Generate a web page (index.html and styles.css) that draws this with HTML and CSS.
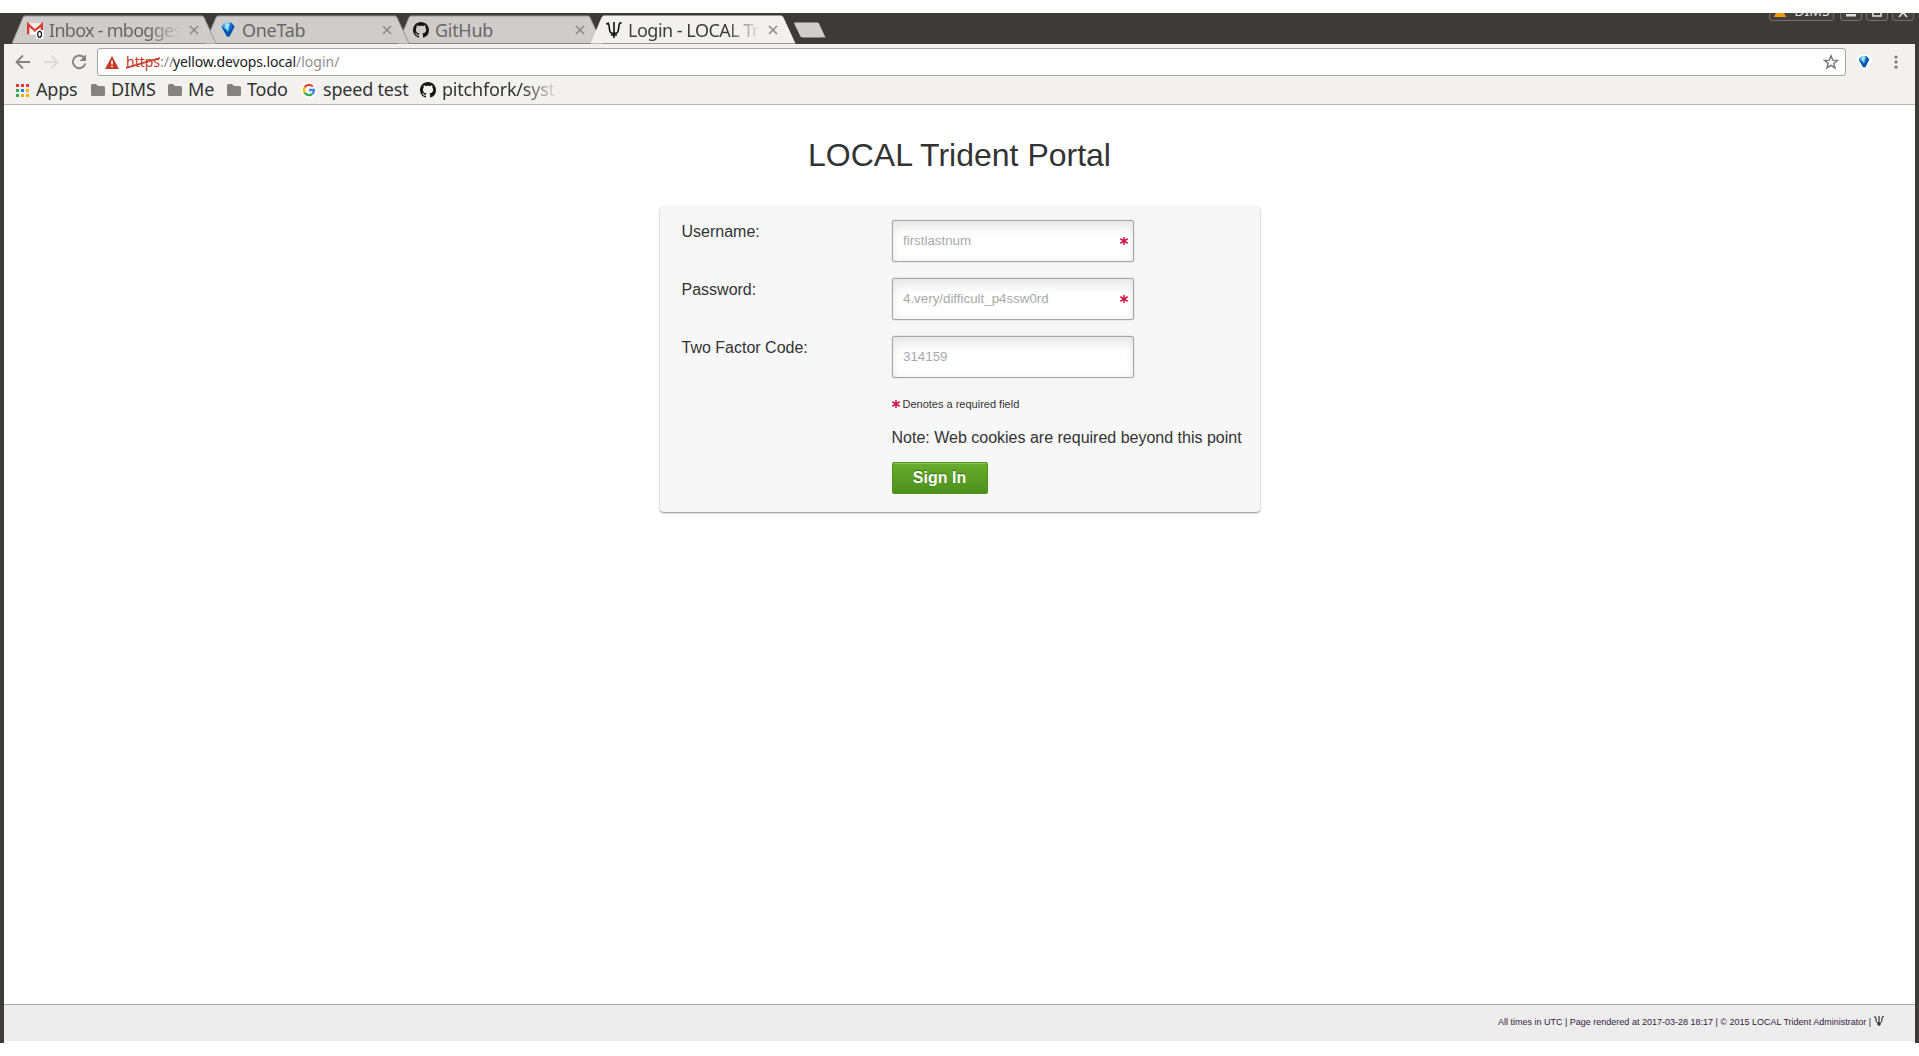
FILE: index.html
```html
<!DOCTYPE html>
<html lang="en">
<head>
<meta charset="utf-8">
<title>Login - LOCAL Trident Portal</title>
<link rel="stylesheet" href="styles.css">
</head>
<body>
<svg class="defs" width="0" height="0">
  <defs>
    <linearGradient id="blue" x1="0" x2="1"><stop offset="0" stop-color="#1674cf"/><stop offset=".4" stop-color="#8fdcff"/><stop offset=".6" stop-color="#1b83e2"/><stop offset="1" stop-color="#04398f"/></linearGradient>
    <symbol id="tab" viewBox="0 0 208 31"><path d="M0 30.500L11 4.500Q11.700 3 13 3H190Q191.500 3 192 4.500L204 30.500"/></symbol>
    <symbol id="close" viewBox="0 0 10 10"><path d="M1 1L9 9M9 1L1 9" stroke="#8a8988" stroke-width="1.500"/></symbol>
    <symbol id="github" viewBox="0 0 16 16"><path fill="#161616" d="M8 0C3.580 0 0 3.580 0 8c0 3.540 2.290 6.530 5.470 7.590.4.070.55-.17.55-.38 0-.19-.01-.82-.01-1.490-2.010.37-2.530-.49-2.690-.94-.09-.23-.48-.94-.82-1.130-.28-.15-.68-.52-.01-.53.63-.01 1.080.58 1.230.82.72 1.210 1.870.87 2.330.66.070-.52.28-.87.51-1.070-1.780-.2-3.640-.89-3.640-3.950 0-.87.31-1.590.82-2.150-.08-.2-.36-1.020.080-2.120 0 0 .67-.21 2.200.82.64-.18 1.320-.27 2-.27s1.360.09 2 .27c1.530-1.040 2.200-.82 2.200-.82.44 1.100.16 1.920.080 2.120.51.56.82 1.270.82 2.150 0 3.070-1.870 3.750-3.650 3.950.29.25.54.73.54 1.480 0 1.070-.01 1.930-.01 2.200 0 .21.15.46.55.38A8 8 0 0 0 16 8c0-4.420-3.580-8-8-8z"/></symbol>
    <symbol id="gem" viewBox="0 0 16 16"><path d="M4.500 .8H11.500L14.500 4.500L9.500 14.500H6.800L1.500 4.500z" fill="url(#blue)"/><path d="M1.500 4.500L6.800 14.500H9.500L14.500 4.500L10 7.500L8 10L6 7.500z" fill="#0754a8"/><path d="M4.500 1.500L7.800 7.500L10 1.500z" fill="#a5e6ff"/></symbol>
    <symbol id="trident" viewBox="0 0 16 16"><path d="M8 0V16M.3 2L2.300 1.200C4 4 2.500 9 5 10.800C6 11.600 10 11.600 11 10.800C13.500 9 12 4 13.700 1.200L15.700 .6M5 13H11" fill="none" stroke="#111" stroke-width="1.600"/></symbol>
    <symbol id="folder" viewBox="0 0 14 12"><path d="M1.500 0H5L7 2H12.500Q14 2 14 3.500V10.500Q14 12 12.500 12H1.500Q0 12 0 10.500V1.500Q0 0 1.500 0z" fill="#848382"/></symbol>
    <symbol id="star" viewBox="0 0 8 8"><path d="M4 0V8M.3 1.700L7.700 6.300M7.700 1.700L.3 6.300" stroke="#d01545" stroke-width="1.500"/></symbol>
  </defs>
</svg>
<div class="window">
  <div class="strip">
    <div class="tab t1">
      <svg class="shape"><use href="#tab"/></svg>
      <svg class="fav" viewBox="0 0 16 16"><path d="M0 1.500H16V12.500H0z" fill="#fff"/><path d="M1.200 12.500V2.500L8 8.500L14.800 2.500V12.500" fill="none" stroke="#dc3e35" stroke-width="2.400"/><path d="M2 1.500L8 6.800L14 1.500z" fill="#f1eeee"/><rect x="9" y="8" width="7.500" height="9" fill="#fff"/><ellipse cx="12.600" cy="12.300" rx="1.900" ry="3" fill="none" stroke="#111" stroke-width="1.200"/></svg>
      <span class="label fade inbox">Inbox - mbogges</span><svg class="x"><use href="#close"/></svg>
    </div>
    <div class="tab t2">
      <svg class="shape"><use href="#tab"/></svg><svg class="fav"><use href="#gem"/></svg>
      <span class="label">OneTab</span><svg class="x"><use href="#close"/></svg>
    </div>
    <div class="tab t3">
      <svg class="shape"><use href="#tab"/></svg><svg class="fav"><use href="#github"/></svg>
      <span class="label">GitHub</span><svg class="x"><use href="#close"/></svg>
    </div>
    <div class="tab t4">
      <svg class="shape"><use href="#tab"/></svg><svg class="fav"><use href="#trident"/></svg>
      <span class="label fade login">Login - LOCAL Tr</span><svg class="x"><use href="#close"/></svg>
    </div>
    <svg class="newtab" viewBox="0 0 34 16"><path d="M2 .5H24Q25.500 .5 26 1.500L32.500 15.500H10Q8 15.500 7.200 14L1.200 1.500Q1 .5 2 .5z" fill="#cfcdcc"/></svg>
    <div class="controls">
      <div class="ctl user"><svg width="14" height="14" viewBox="0 0 14 14"><path d="M7 0L13 13H1z" fill="#f29a0d"/></svg><span>DIMS</span></div>
      <div class="ctl"><svg width="10" height="14"><rect y="10" width="10" height="2.500" fill="#ddd"/></svg></div>
      <div class="ctl"><svg width="10" height="14"><rect x="1" y="3" width="8" height="9" fill="none" stroke="#ddd" stroke-width="1.600"/></svg></div>
      <div class="ctl"><svg width="10" height="14"><path d="M1 4L9 13M9 4L1 13" stroke="#ddd" stroke-width="1.700"/></svg></div>
    </div>
  </div>
  <div class="toolbar">
    <div class="nav">
      <svg viewBox="0 0 16 16"><path d="M15 8H2M8 1.500L1.500 8L8 14.500" fill="none" stroke="#838282" stroke-width="1.800"/></svg>
      <svg viewBox="0 0 16 16"><path d="M1 8H14M8 1.500L14.500 8L8 14.500" fill="none" stroke="#dcdad9" stroke-width="1.800"/></svg>
      <svg viewBox="0 0 16 16"><path d="M13.200 4A6.300 6.300 0 1 0 14.300 9.500" fill="none" stroke="#838282" stroke-width="1.900"/><path d="M15 .5V7H8.500z" fill="#838282"/></svg>
    </div>
    <div class="omnibox">
      <svg class="warn" viewBox="0 0 14 13"><path d="M7 0L14 13H0z" fill="#c53929"/><path d="M6.200 4.500H7.800V8.500H6.200zM6.200 9.800H7.800V11.300H6.200z" fill="#fff"/></svg>
      <div class="url"><span class="https">https<svg viewBox="0 0 35 12" class="strike"><path d="M0 11L34 1" stroke="#c53929" stroke-width="1.700"/></svg></span><span class="dim">://</span><span class="host">yellow.devops.local</span><span class="dim path">/login/</span></div>
      <svg class="bookmark" viewBox="0 0 16 16"><path d="M8 1.800L9.700 6.100L14.400 6.400L10.800 9.400L12 13.900L8 11.400L4 13.900L5.200 9.400L1.600 6.400L6.300 6.100z" fill="none" stroke="#757474" stroke-width="1.400"/></svg>
    </div>
    <svg class="ext" viewBox="0 0 16 16"><path d="M4 2H12L15 5L10 14.500H7L1 5z" fill="#fff" stroke="#fff" stroke-width="2.500"/><use href="#gem" x="1.500" y="1.500" width="13" height="13"/></svg>
    <svg class="menu" viewBox="0 0 4 14"><g fill="#757474"><circle cx="2" cy="2" r="1.600"/><circle cx="2" cy="7" r="1.600"/><circle cx="2" cy="12" r="1.600"/></g></svg>
  </div>
  <div class="bookmarks">
    <svg class="apps" viewBox="0 0 13 13"><path d="M0 0h3v3H0zM5 0h3v3H5zM10 0h3v3H10z" fill="#e53935"/><path d="M0 5h3v3H0zM0 10h3v3H0z" fill="#34a853"/><path d="M5 5h3v3H5z" fill="#1a86e8"/><path d="M10 5h3v3H10zM5 10h3v3H5zM10 10h3v3H10z" fill="#f9b20b"/></svg><span class="b1">Apps</span>
    <svg class="folder"><use href="#folder"/></svg><span class="b2">DIMS</span>
    <svg class="folder"><use href="#folder"/></svg><span class="b3">Me</span>
    <svg class="folder"><use href="#folder"/></svg><span class="b4">Todo</span>
    <svg class="google" viewBox="0 0 16 16"><circle cx="8" cy="8" r="8" fill="#fff"/><g fill="none" stroke-width="2.300"><path d="M3.600 5.400A5.100 5.100 0 0 1 11.800 4.500" stroke="#ea4335"/><path d="M3.600 5.400A5.100 5.100 0 0 0 3.600 10.600" stroke="#fbbc05"/><path d="M3.600 10.600A5.100 5.100 0 0 0 11.300 11.900" stroke="#34a853"/><path d="M11.300 11.900A5 5 0 0 0 13 8H8" stroke="#4285f4"/></g></svg><span class="b5">speed test</span>
    <svg class="gh"><use href="#github"/></svg><span class="b6">pitchfork/syst</span>
  </div>
  <main class="page">
    <h1>LOCAL Trident Portal</h1>
    <form class="card">
      <label for="user">Username:</label>
      <div class="field"><input id="user" placeholder="firstlastnum"><svg><use href="#star"/></svg></div>
      <label for="pass">Password:</label>
      <div class="field"><input id="pass" type="password" placeholder="4.very/difficult_p4ssw0rd"><svg><use href="#star"/></svg></div>
      <label for="code">Two Factor Code:</label>
      <div class="field"><input id="code" placeholder="314159"></div>
      <div class="required"><svg><use href="#star"/></svg>Denotes a required field</div>
      <div class="note">Note: Web cookies are required beyond this point</div>
      <button type="button">Sign In</button>
    </form>
  </main>
  <footer><span>All times in UTC | Page rendered at 2017-03-28 18:17 | © 2015 LOCAL Trident Administrator |</span><svg><use href="#trident"/></svg></footer>
</div>
</body>
</html>
```
FILE: styles.css
```css
* { box-sizing: border-box; }
body { margin: 0; padding-top: 13px; background: #fff; font-family: "Liberation Sans", Arial, sans-serif; color: #333; overflow: hidden; }
svg { display: block; flex: none; }
.defs { position: absolute; }
.window { height: 1030px; display: flex; flex-direction: column; border: solid #3c3b37; border-width: 0 4px; padding-bottom: 2px; }
.strip { height: 31px; display: flex; padding-left: 8px; background: #3c3b37; overflow: hidden; font: 18px "Noto Sans", sans-serif; }
.strip, .tab { position: relative; }
.tab { width: 193px; flex: none; display: flex; align-items: center; padding: 2px 0 0 15px; color: #686766; isolation: isolate; }
.shape { position: absolute; left: 0; top: 0; width: 208px; height: 31px; fill: #cfcdcc; stroke: #999897; stroke-width: 1; z-index: -1; }
.t1 { z-index: 3; }
.t2 { z-index: 2; }
.t3 { z-index: 1; }
.t4 { z-index: 4; color: #3c3c3c; }
.t4 .shape { fill: #f2f1f0; stroke: #f2f1f0; }
.fav { width: 16px; height: 16px; overflow: visible; }
.label { width: 132px; margin-left: 6px; white-space: nowrap; letter-spacing: -.3px; }
.inbox { letter-spacing: -.72px; }
.login { letter-spacing: -.5px; }
.fade { -webkit-mask-image: linear-gradient(90deg, #000 75%, transparent 100%); mask-image: linear-gradient(90deg, #000 75%, transparent 100%); }
.x { width: 10px; height: 10px; margin-left: 8px; }
.newtab { width: 34px; height: 16px; margin: 9px 0 0 9px; }
.controls { display: flex; gap: 4px; margin: -10px 1px 0 auto; height: 18px; }
.ctl { width: 22px; height: 18px; border: 1px solid #74726c; border-radius: 3px; display: flex; justify-content: center; background: #42413d; }
.user { width: 65px; gap: 7px; margin-right: 2px; color: #ddd; font-size: 14px; line-height: 14px; }
.toolbar { height: 33px; display: flex; align-items: center; padding: 4px 17px 1px 11px; background: #f2f1f0; }
.nav { display: flex; width: 82px; gap: 12px; }
.nav svg { width: 16px; height: 16px; }
.omnibox { width: 1749px; height: 28px; border: 1px solid #a5a4a3; border-radius: 3px; background: #fff; display: flex; align-items: center; padding: 0 6px 0 7px; }
.warn { width: 14px; height: 13px; margin-right: 7px; }
.url { font: 14px "Noto Sans", sans-serif; display: flex; flex: 1; color: #222; white-space: nowrap; padding-bottom: 1px; }
.https { position: relative; color: #c53929; width: 34px; }
.strike { position: absolute; left: 0; top: 5px; width: 35px; height: 12px; }
.dim { color: #8f8f8f; width: 13px; }
.host { width: 123px; letter-spacing: -.15px; }
.bookmark, .ext { width: 16px; height: 16px; }
.ext { margin-left: 10px; overflow: visible; }
.menu { width: 4px; height: 14px; margin-left: auto; }
.bookmarks { height: 28px; display: flex; align-items: center; padding: 0 0 1px 12px; background: #f2f1f0; border-bottom: 1px solid #b6b5b4; font: 18px "Noto Sans", sans-serif; letter-spacing: -.2px; color: #333; }
.bookmarks span { white-space: nowrap; margin: -2px 0 0 6px; }
.apps { width: 13px; height: 13px; }
.folder { width: 14px; height: 12px; }
.google, .gh { width: 16px; height: 16px; }
.b1 { width: 56px; padding-left: 1px; }
.b2 { width: 57px; }
.b3 { width: 39px; }
.b4 { width: 54px; }
.b5 { width: 97px; }
.b6 { width: 116px; -webkit-mask-image: linear-gradient(90deg, #000 70%, transparent); mask-image: linear-gradient(90deg, #000 70%, transparent); }
.page { flex: 1; min-height: 0; }
h1 { margin: 32px 0; height: 37px; line-height: 37px; font-size: 32px; font-weight: 400; text-align: center; }
.card { width: 600px; height: 306px; margin: 0 auto; padding: 14px 0 0 22px; display: grid; grid-template-columns: 210px 1fr; grid-template-rows: 58px 58px 58px 34px 34px 32px; background: #f7f7f7; border-radius: 4px; box-shadow: 0 1px 2px rgba(0,0,0,.45); font-size: 16px; }
label { padding-top: 3px; line-height: 18px; }
.field { position: relative; width: 242px; height: 42px; }
.field input { display: block; width: 242px; height: 42px; margin: 0; padding: 0 10px 1px; border: 1px solid #a6a6a6; border-radius: 2px; background: #fff; font: 13.333px "Liberation Sans", Arial, sans-serif; text-indent: .5px; box-shadow: inset 0 10px 12px -4px #e6e6e6, inset 0 0 8px #eee, 0 0 2px #ccc; }
.field input::placeholder { color: #a9a9a9; }
.field svg { position: absolute; right: 6px; top: 17px; width: 8px; height: 8px; }
.required, .note, button { grid-column: 2; }
.required { display: flex; font-size: 11px; line-height: 20px; }
.required svg { width: 8px; height: 8px; margin: 6px 3px 0 0; }
.note { white-space: nowrap; padding-top: 1px; line-height: 18px; }
button { width: 96px; height: 32px; padding: 0; border: 1px solid #4c9218; border-radius: 2px; background: linear-gradient(#68ae2e, #4d8f1c); box-shadow: inset 0 1px #8cc65a; color: #fff; font: bold 16px "Liberation Sans", Arial, sans-serif; text-shadow: 0 -1px 1px #346b0d; }
footer { height: 37px; display: flex; padding: 12px 31px 0 0; justify-content: flex-end; background: #ededed; border-top: 1px solid #a8a8a8; font-size: 9px; line-height: 11px; color: #35203f; white-space: nowrap; }
footer svg { width: 10px; height: 10px; margin-left: 3px; margin-top: -1px; }
```
